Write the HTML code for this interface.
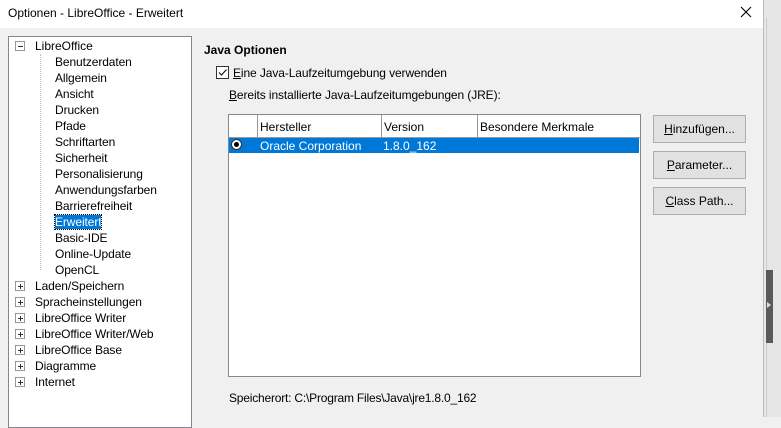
<!DOCTYPE html>
<html><head><style>
body{margin:0;width:781px;height:417px;overflow:hidden;background:#f0f0f0;font-family:"Liberation Sans",sans-serif;font-size:12px;color:#000;position:relative}
.a{position:absolute;white-space:nowrap}
.t{line-height:16px}
u{text-decoration:underline}
.btn{position:absolute;left:653px;width:91px;height:26px;border:1px solid #adadad;background:#e1e1e1;text-align:center;line-height:26px}
.exp{position:absolute;left:15px;width:8px;height:8px;border:1px solid #999;background:#fff}
.exp:before{content:"";position:absolute;left:2px;top:4px;width:5px;height:1px;background:#333}
.plus:after{content:"";position:absolute;left:4px;top:2px;width:1px;height:5px;background:#333}
</style></head><body>
<div class="a" style="left:0;top:0;width:763px;height:28px;background:#fff"></div>
<div class="a" style="left:8px;top:6px;font-size:12px">Optionen - LibreOffice - Erweitert</div>
<svg class="a" style="left:740px;top:6px" width="12" height="12"><path d="M1 1L11 11M11 1L1 11" stroke="#000" stroke-width="1.1"/></svg>
<div class="a" style="left:763px;top:0;width:18px;height:417px;background:#e6e6e6;border-left:1px solid #bbb"></div>
<div class="a" style="left:766px;top:18px;width:1px;height:399px;background:#ccc"></div>
<div class="a" style="left:766px;top:270px;width:7px;height:73px;background:#5a5a5a"></div>
<div class="a" style="left:767px;top:302px;width:0;height:0;border-left:4px solid #ddd;border-top:3px solid transparent;border-bottom:3px solid transparent"></div>

<div class="a" style="left:8px;top:36px;width:182px;height:390px;background:#fff;border:1px solid #828790"></div>
<div class="a" style="left:40px;top:54px;width:1px;height:216px;border-left:1px dotted #bbb"></div>
<div class="exp" style="top:41px"></div>
<div class="a t" style="left:35px;top:38px">LibreOffice</div>
<div class="a t" style="left:55px;top:54px;letter-spacing:-0.1px">Benutzerdaten<br>Allgemein<br>Ansicht<br>Drucken<br>Pfade<br>Schriftarten<br>Sicherheit<br>Personalisierung<br>Anwendungsfarben<br>Barrierefreiheit<br><span style="background:#0078d7;color:#fff;outline:1px dotted #000">Erweitert</span><br>Basic-IDE<br>Online-Update<br>OpenCL</div>
<div class="exp plus" style="top:281px"></div><div class="exp plus" style="top:297px"></div><div class="exp plus" style="top:313px"></div><div class="exp plus" style="top:329px"></div><div class="exp plus" style="top:345px"></div><div class="exp plus" style="top:361px"></div><div class="exp plus" style="top:377px"></div>
<div class="a t" style="left:35px;top:278px;letter-spacing:-0.1px">Laden/Speichern<br>Spracheinstellungen<br>LibreOffice Writer<br>LibreOffice Writer/Web<br>LibreOffice Base<br>Diagramme<br>Internet</div>

<div class="a" style="left:204px;top:43px;font-weight:bold">Java Optionen</div>
<div class="a" style="left:216px;top:66px;width:11px;height:11px;border:1px solid #333;background:#fff"></div>
<svg class="a" style="left:217px;top:67px" width="11" height="11"><path d="M2 5.5L4.5 8L9.5 2.5" stroke="#000" fill="none" stroke-width="1"/></svg>
<div class="a" style="left:233px;top:66px;letter-spacing:-0.1px"><u>E</u>ine Java-Laufzeitumgebung verwenden</div>
<div class="a" style="left:229px;top:88px;letter-spacing:-0.1px"><u>B</u>ereits installierte Java-Laufzeitumgebungen (JRE):</div>

<div class="a" style="left:228px;top:114px;width:411px;height:261px;background:#fff;border:1px solid #828790"></div>
<div class="a" style="left:229px;top:115px;width:411px;height:22px;border-bottom:1px solid #999"></div>
<div class="a" style="left:257px;top:115px;width:1px;height:22px;background:#999"></div>
<div class="a" style="left:381px;top:115px;width:1px;height:22px;background:#999"></div>
<div class="a" style="left:477px;top:115px;width:1px;height:22px;background:#999"></div>
<div class="a" style="left:260px;top:120px">Hersteller</div>
<div class="a" style="left:384px;top:120px">Version</div>
<div class="a" style="left:480px;top:120px">Besondere Merkmale</div>
<div class="a" style="left:229px;top:138px;width:410px;height:15px;background:#0078d7"></div>
<div class="a" style="left:231px;top:139px;width:9px;height:9px;border-radius:50%;background:#fff;border:1px solid #333"></div>
<div class="a" style="left:234px;top:142px;width:5px;height:5px;border-radius:50%;background:#000"></div>
<div class="a" style="left:260px;top:139px;color:#fff">Oracle Corporation</div>
<div class="a" style="left:383px;top:139px;color:#fff">1.8.0_162</div>

<div class="btn" style="top:115px"><u>H</u>inzufügen...</div>
<div class="btn" style="top:151px"><u>P</u>arameter...</div>
<div class="btn" style="top:187px"><u>C</u>lass Path...</div>

<div class="a" style="left:229px;top:391px;letter-spacing:-0.2px">Speicherort: C:\Program Files\Java\jre1.8.0_162</div>
</body></html>
